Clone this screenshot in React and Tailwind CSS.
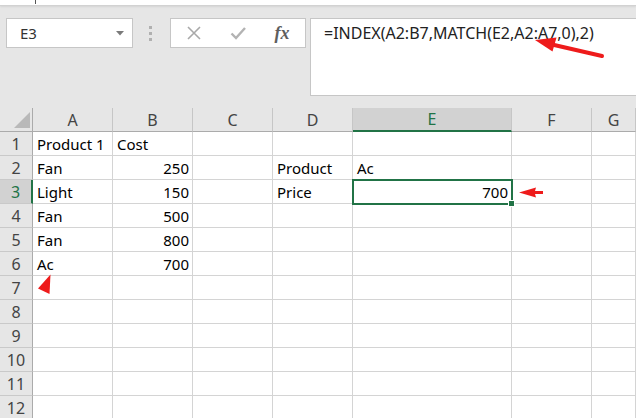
import React from 'react';

const columns = [
    { key: 'A', w: 'w-[80px]' },
    { key: 'B', w: 'w-[80px]' },
    { key: 'C', w: 'w-[80px]' },
    { key: 'D', w: 'w-[80px]' },
    { key: 'E', w: 'w-[159px]' },
    { key: 'F', w: 'w-[80px]' },
    { key: 'G', w: 'flex-1' },
];

// cell values by row; numbers are right aligned like Excel
const data = {
    1: { A: 'Product 1', B: 'Cost' },
    2: { A: 'Fan', B: 250, D: 'Product', E: 'Ac' },
    3: { A: 'Light', B: 150, D: 'Price', E: 700 },
    4: { A: 'Fan', B: 500 },
    5: { A: 'Fan', B: 800 },
    6: { A: 'Ac', B: 700 },
};

const rows = [1, 2, 3, 4, 5, 6, 7, 8, 9, 10, 11, 12];

const Toolbar = () => (
    <div className="flex items-start h-[102px] pt-[12px] bg-[#e6e6e6]">
        <div className="ml-[6px] w-[127px] h-[30px] shrink-0 border border-[#c6c6c6] bg-white flex items-center pl-[13px] pr-[8px] text-[15px] text-[#333]">
            <span className="flex-1">E3</span>
            <svg width="8" height="5" viewBox="0 0 8 5">
                <polygon points="0,0 8,0 4,4.5" fill="#7a7a7a" />
            </svg>
        </div>
        <div className="ml-[16px] mt-[8px] flex flex-col gap-[3px] shrink-0">
            <span className="w-[3px] h-[3px] bg-[#b0b0b0]" />
            <span className="w-[3px] h-[3px] bg-[#b0b0b0]" />
            <span className="w-[3px] h-[3px] bg-[#b0b0b0]" />
        </div>
        <div className="ml-[18px] w-[136px] h-[30px] shrink-0 border border-[#c6c6c6] bg-white flex items-center">
            <span className="w-[46px] flex justify-center">
                <svg width="14" height="14" viewBox="0 0 14 14">
                    <path d="M1 1 L13 13 M13 1 L1 13" stroke="#a9a9a9" strokeWidth="1.6" fill="none" />
                </svg>
            </span>
            <span className="w-[42px] flex justify-center">
                <svg width="16" height="14" viewBox="0 0 16 14">
                    <path d="M1.5 7.5 L6 12 L15 2" stroke="#b3b3b3" strokeWidth="2.4" fill="none" />
                </svg>
            </span>
            <span className="w-[46px] flex justify-center font-['Liberation_Serif',serif] italic font-bold text-[18px] text-[#5e5e5e] leading-none">
                fx
            </span>
        </div>
        <div className="ml-[4px] flex-1 h-[78px] border border-r-0 border-[#c6c6c6] bg-white pl-[13px] pt-[2px] text-[16px] leading-[24px] text-[#222]">
            =INDEX(A2:B7,MATCH(E2,A2:A7,0),2)
        </div>
    </div>
);

const HeaderRow = () => (
    <div className="flex h-[24px]">
        <div className="w-[33px] shrink-0 bg-[#e6e6e6] border-r border-b border-[#ababab] relative">
            <svg className="absolute left-0 top-0" width="33" height="24" viewBox="0 0 33 24">
                <polygon points="30,4 30,20 14,20" fill="#b9b9b9" />
            </svg>
        </div>
        {columns.map((col) =>
            col.key === 'E' ? (
                <div
                    key={col.key}
                    className={`${col.w} shrink-0 bg-[#d2d2d2] border-r border-[#c6c6c6] border-b-2 border-b-[#217346] flex items-center justify-center text-[16px] text-[#217346]`}
                >
                    {col.key}
                </div>
            ) : (
                <div
                    key={col.key}
                    className={`${col.w} shrink-0 bg-[#e6e6e6] border-r border-[#c6c6c6] border-b border-b-[#ababab] flex items-center justify-center text-[16px] text-[#444]`}
                >
                    {col.key}
                </div>
            )
        )}
    </div>
);

const Row = ({ n }) => {
    const values = data[n] || {};
    const active = n === 3;
    return (
        <div className="flex h-[24px]">
            <div
                className={
                    active
                        ? 'w-[33px] shrink-0 bg-[#d2d2d2] border-b border-b-[#c9c9c9] border-r-2 border-r-[#217346] flex items-center justify-center text-[16px] text-[#217346]'
                        : 'w-[33px] shrink-0 bg-[#e6e6e6] border-b border-b-[#c9c9c9] border-r border-r-[#ababab] flex items-center justify-center text-[16px] text-[#444]'
                }
            >
                {n}
            </div>
            {columns.map((col) => {
                const v = values[col.key];
                const isNum = typeof v === 'number';
                const selected = active && col.key === 'E';
                return (
                    <div
                        key={col.key}
                        className={`${col.w} shrink-0 relative bg-white border-r border-b border-[#d4d4d4] flex items-center text-[15px] leading-[24px] text-black whitespace-nowrap ${isNum ? 'justify-end pr-[3px]' : 'pl-[4px]'}`}
                    >
                        {v}
                        {selected && (
                            <div className="absolute left-[-1px] top-[-1px] w-[161px] h-[26px] border-2 border-[#217346] z-10">
                                <span className="absolute right-[-4px] bottom-[-4px] w-[7px] h-[7px] bg-[#217346] border border-white" />
                            </div>
                        )}
                    </div>
                );
            })}
        </div>
    );
};

const App = () => {
    return (
        <div className="relative w-[636px] h-[418px] overflow-hidden bg-[#e6e6e6] font-['Noto_Sans',sans-serif]">
            <div className="relative h-[6px] bg-white border-b border-[#d2d2d2] shadow-[0_1px_2px_rgba(0,0,0,0.08)]">
                <span className="absolute left-[35px] top-0 w-px h-[4px] bg-[#555]" />
            </div>
            <Toolbar />
            <div className="flex flex-col">
                <HeaderRow />
                {rows.map((n) => (
                    <Row key={n} n={n} />
                ))}
            </div>

            {/* red annotation arrows drawn over the sheet */}
            <svg className="absolute left-0 top-0 pointer-events-none z-20" width="636" height="418" viewBox="0 0 636 418">
                <line x1="602" y1="56" x2="552" y2="44.5" stroke="#ee1b1b" strokeWidth="4" strokeLinecap="round" />
                <polygon points="535,40 556.5,37.5 552.5,51.5" fill="#ee1b1b" />
                <polygon points="519,192.5 536,187.5 535,191 543,191 543,194 535,194 536,197.5" fill="#ee1b1b" />
                <polygon points="38,288.5 50.5,274.5 49.5,294" fill="#ee1b1b" />
            </svg>
        </div>
    );
};

export default App;
